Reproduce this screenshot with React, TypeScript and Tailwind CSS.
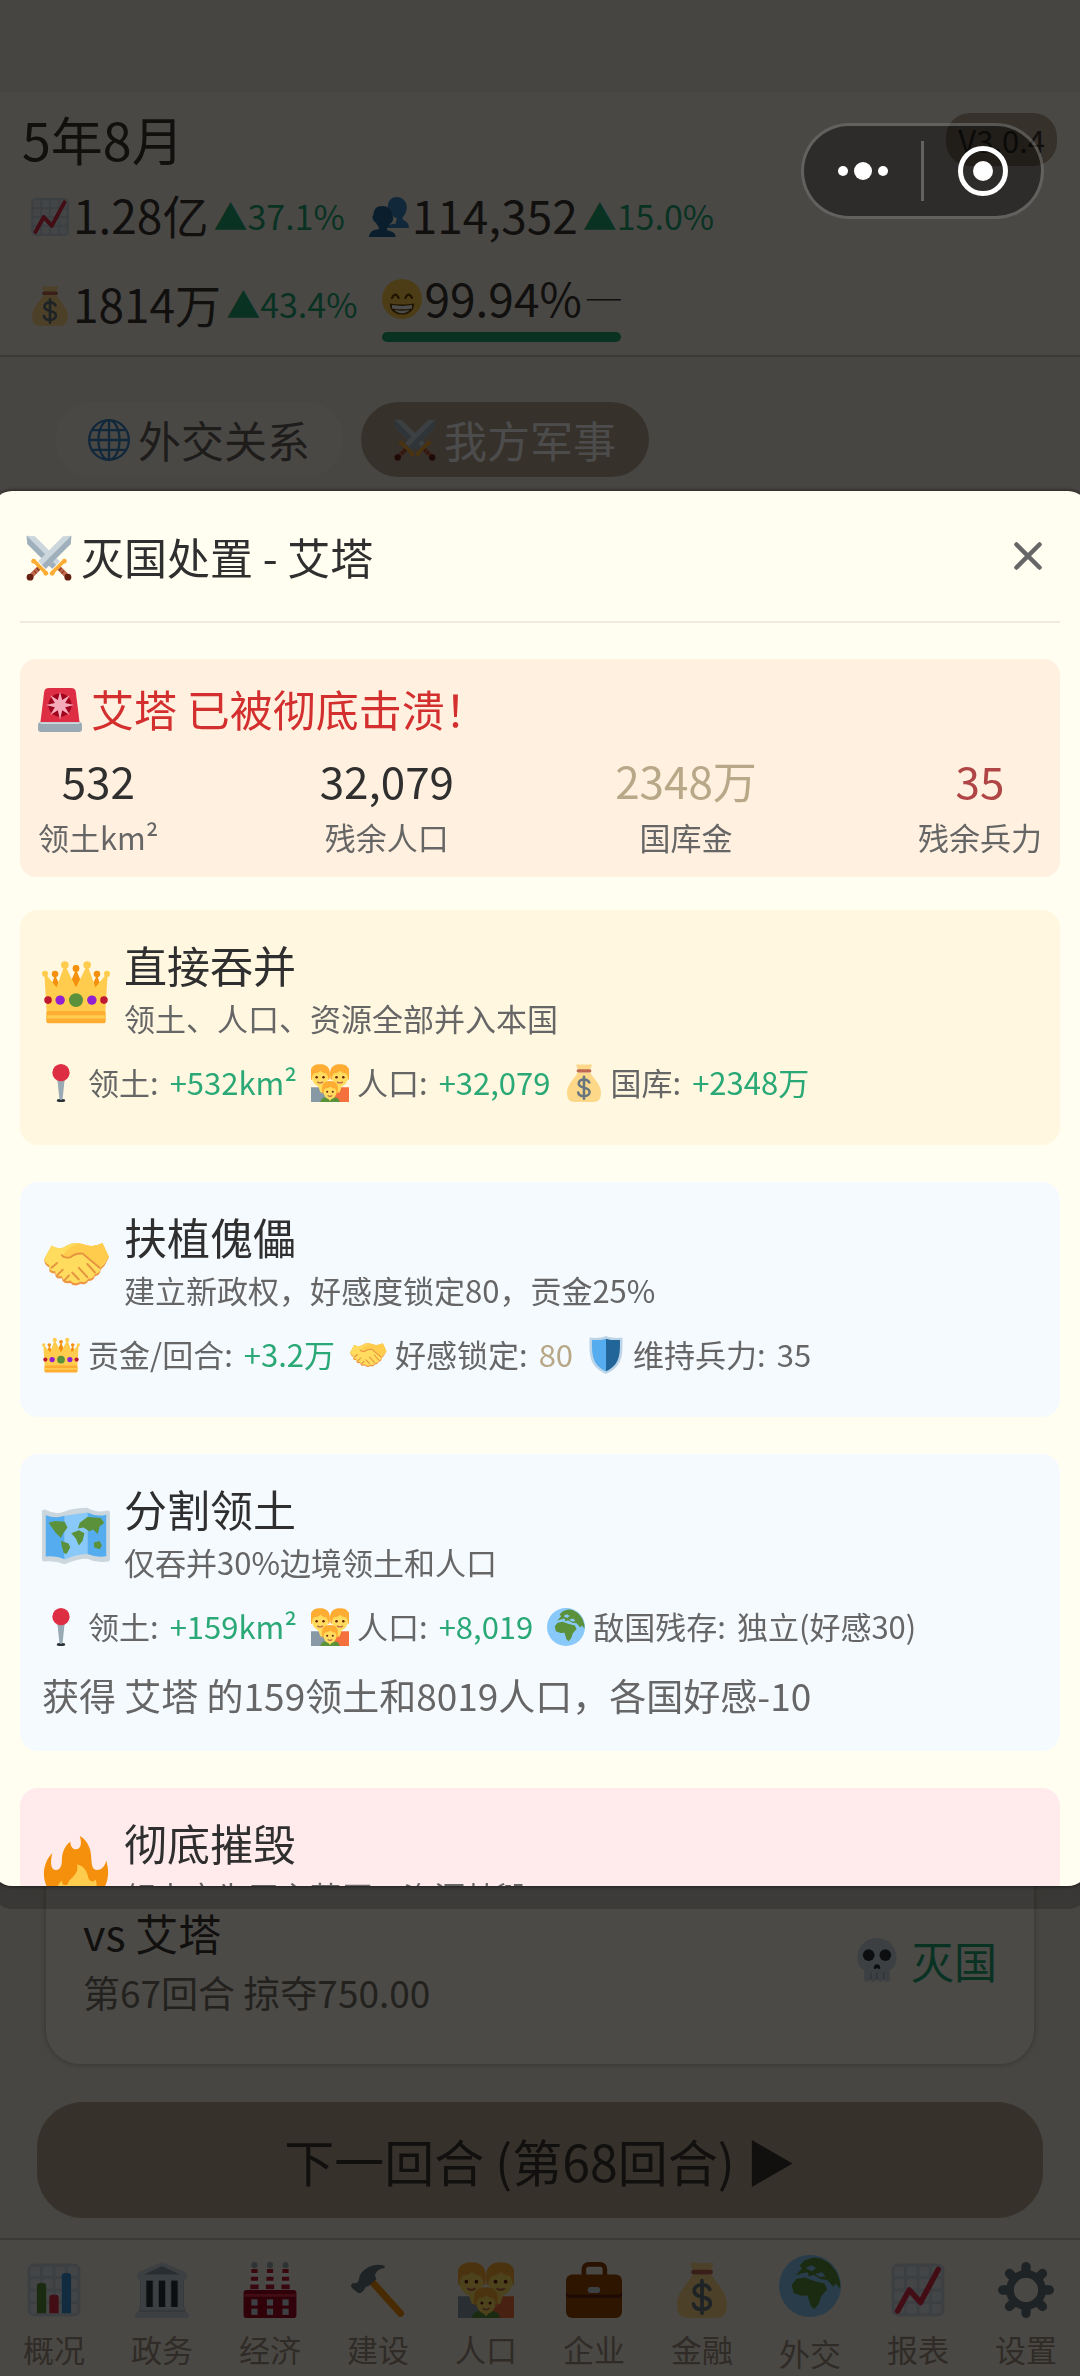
import type { ReactNode } from "react";

const GRID = [4, 12, 20, 28];

function ChartTile() {
  return (
    <>
      <rect x="1" y="1" width="34" height="34" rx="4" fill="#ccd6dd" />
      {GRID.map((x) =>
        GRID.map((y) => (
          <rect key={`${x}-${y}`} x={x - 1} y={y - 1} width="6" height="6" rx="1" fill="#e1e8ed" />
        )),
      )}
    </>
  );
}

function Sword() {
  return (
    <>
      <path d="M35.5.5 29 1 9.500 20.500l6 6L35 7z" fill="#ccd6dd" />
      <path d="M35.500.5 12.500 23.500l3 3L35 7z" fill="#9fb0bc" />
      <path d="m11 25-6.500 6.500" stroke="#c1694f" strokeWidth="3.600" />
      <path d="m8.300 26 2 2M6.300 28l2 2" stroke="#893b22" strokeWidth="1" />
      <circle cx="3.200" cy="33" r="2.700" fill="#662113" />
      <path d="m6.500 20.500 9 9" stroke="#ffac33" strokeWidth="2.800" />
      <circle cx="6" cy="20.500" r="1.900" fill="#ffac33" />
      <circle cx="15.500" cy="30" r="1.900" fill="#ffac33" />
    </>
  );
}

function Face({ x, y, s }: { x: number; y: number; s: number }) {
  return (
    <g transform={`translate(${x} ${y}) scale(${s})`}>
      <ellipse cx="0" cy="1" rx="7.200" ry="8.500" fill="#ffdc5d" />
      <path d="M-8.300 3C-10-7-6-10 0-10S10-7 8.300 3L7 4C7.500 0 6 0 5.500-2 3-2 1-3 .5-4.500-1-2.500-4-2-5.500-2-6 0-7.500 0-7 4z" fill="#ffac33" />
      <circle cx="-3" cy="1.500" r="1.100" fill="#662113" />
      <circle cx="3" cy="1.500" r="1.100" fill="#662113" />
      <path d="M-2.500 5.500q2.500 1.800 5 0" fill="none" stroke="#c1694f" strokeWidth="1.200" />
    </g>
  );
}

const drawings: Record<string, ReactNode> = {
  rising: (
    <>
      <ChartTile />
      <path d="M4.900 31.500 12.400 18l7.200 8L31 4.800" fill="none" stroke="#dd2e44" strokeWidth="3.600" strokeLinecap="round" strokeLinejoin="round" />
    </>
  ),
  bars: (
    <>
      <ChartTile />
      <path d="M7 33V15.500a2 2 0 0 1 2-2h2a2 2 0 0 1 2 2V33z" fill="#5c913b" />
      <path d="M15 33V23a2 2 0 0 1 2-2h2a2 2 0 0 1 2 2v10z" fill="#dd2e44" />
      <path d="M23 33V9a2 2 0 0 1 2-2h2a2 2 0 0 1 2 2v24z" fill="#3b94d9" />
    </>
  ),
  people: (
    <>
      <path d="M24 24c0-2 1-3 1-5-6-2-8-6-8-11 0-5 4-8 8-8s9 3 9 9-3 8-4 10c0 3 6 2 6 9H16c0-2 3-4 8-4z" fill="#3b88c3" />
      <path d="M9 29c0-2-1-3-3-6-2-1-4-5-2-7 0-5 3-8 8-8s9 3 9 9c2 2 0 6-2 7-1 3-3 3-3 5s8 1 8 7H0c0-5 5-7 9-7z" fill="#269" />
    </>
  ),
  money: (
    <>
      <path d="M12.500 6 10.500 1q2-1.500 4 0 2-1.500 3.800 0 2-1.500 3.700 0Q24-.500 25.500 1L23.500 6z" fill="#fdd888" />
      <path d="M12 8C9 14 1 20 2 28c0 6 3 8 7 8h18c4 0 7-2 7-8 1-8-7-14-10-20z" fill="#fdd888" />
      <rect x="11" y="5" width="14" height="3" rx="1.500" fill="#bf6952" />
      <path d="M23 17.500c-1-2-3-2.800-5-2.800-3 0-5 1.500-5 3.800 0 5.500 10.300 2.500 10.300 8 0 2.500-2.300 4-5.300 4s-5-1.200-5.500-3.500M18 12v21" fill="none" stroke="#67757f" strokeWidth="2.400" strokeLinecap="round" />
    </>
  ),
  grin: (
    <>
      <circle cx="18" cy="18" r="18" fill="#ffcc4d" />
      <path d="M9 17q3-6 6 0M21 17q3-6 6 0" fill="none" stroke="#664500" strokeWidth="2" strokeLinecap="round" />
      <path d="M7 22q11 2 22 0c0 6-4 10-11 10S7 28 7 22z" fill="#664500" />
      <path d="M9 23.500q9 1.500 18 0v3q-9 1.500-18 0zM11 28q7 1 14 0-2.500 2.800-7 2.800T11 28z" fill="#fff" />
    </>
  ),
  web: (
    <g fill="none" stroke="#3b88c3" strokeWidth="2">
      <circle cx="18" cy="18" r="17" />
      <ellipse cx="18" cy="18" rx="9" ry="17" />
      <path d="M18 1v34M1 18h34M4 9.500h28M4 26.500h28" />
    </g>
  ),
  swords: (
    <>
      <g transform="matrix(-1 0 0 1 36 0)">
        <Sword />
      </g>
      <Sword />
    </>
  ),
  siren: (
    <>
      <path d="M5 3.500C5.400 1 6.500 0 9 0h18c2.500 0 3.600 1 4 3.500L34 28H2z" fill="#dd2e44" />
      <circle cx="18" cy="14" r="9.500" fill="#a0041e" />
      <path d="m18 3 1.800 6.800L26 6l-3.800 6.200 7.300 1.800-7.300 1.800L26 22l-6.200-3.800L18 26l-1.800-7.800L10 22l3.800-6.200L6.500 14l7.300-1.800L10 6l6.200 3.800z" fill="#f4abba" />
      <path d="M2 28h32q2 0 2 2v4q0 2-2 2H2q-2 0-2-2v-4q0-2 2-2z" fill="#99aab5" />
      <path d="M2 28h32v1.500H2z" fill="#ccd6dd" />
    </>
  ),
  crown: (
    <>
      <g fill="#f4900c">
        <path d="M6.900 9 3 20h9zM29.100 9 24 20h9zM18 6l-5 12h10z" />
        <circle cx="6.900" cy="8.500" r="1.700" />
        <circle cx="18" cy="5.500" r="1.800" />
        <circle cx="29.100" cy="8.500" r="1.700" />
      </g>
      <path d="M1.300 9h1l5.400 6.500L11.500 5h1.200L18 15.500 23.300 5h1.200l3.800 10.500L33.700 9h1L33.500 29h-31z" fill="#ffcc4d" />
      <g fill="#ffcc4d">
        <circle cx="1.600" cy="8.400" r="1.600" />
        <circle cx="12.100" cy="3.700" r="2" />
        <circle cx="23.900" cy="3.700" r="2" />
        <circle cx="34.400" cy="8.400" r="1.600" />
      </g>
      <rect x="2.300" y="28" width="31.400" height="6.500" rx="1" fill="#ffac33" />
      <path d="M2.300 30.300h31.400v1.700H2.300z" fill="#ffcc4d" />
      <circle cx="3.200" cy="22.300" r="2" fill="#be1931" />
      <circle cx="32.800" cy="22.300" r="2" fill="#be1931" />
      <circle cx="9.600" cy="22.300" r="2.500" fill="#9020d0" />
      <circle cx="26.400" cy="22.300" r="2.500" fill="#9020d0" />
      <circle cx="18" cy="22.300" r="3.700" fill="#5c913b" />
    </>
  ),
  pin: (
    <>
      <ellipse cx="18" cy="34.500" rx="4" ry="1.500" fill="#292f33" />
      <path d="M14.500 14h7l-2 19.500q-1.500 1-3 0z" fill="#99aab5" />
      <circle cx="18" cy="8.200" r="8.200" fill="#dd2e44" />
    </>
  ),
  family: (
    <>
      <path d="M0 22h11q3 1 3 4v10H0z" fill="#8899a6" />
      <path d="M36 22H25q-3 1-3 4v10h14z" fill="#f4703c" />
      <path d="M6 19h6l1 8H9zM24 19h6l-3 8h-4z" fill="#ffdc5d" />
      <Face x={8.600} y={11} s={1.080} />
      <Face x={27.400} y={11} s={1.080} />
      <path d="M9 36q0-4 5-4.500h8q5 .5 5 4.500z" fill="#5c913b" />
      <path d="M15 31h6l-3 4z" fill="#ffdc5d" />
      <Face x={18} y={25} s={0.88} />
    </>
  ),
  handshake: (
    <>
      <path d="M1.300 15.500 5 8.500Q10 11 13 8.300q4-2.300 9-.6 5 2 10-.7l3.400 7.600L33 19l-2 2q0 3-3 3.500-.5 2.500-3.500 2.500-1.500 2.500-4 1.500-3.500 2-5.500-.5-4 1-4.500-2.500-3.500 1-3.500-2.500-4 0-3-3-3-1.500-2.700-4.500z" fill="#ef9645" />
      <path d="M1.300 15 5 8.200Q10 11 13 8.200q4-2.300 9-.6 5 2 10-.7l3.400 7.300L33 18l-2 2q0 3-3 3.300-.5 2.500-3.500 2.500-1.500 2.500-4 1.500-3.500 2-5.500-.5-4 1-4.500-2.500-3.500 1-3.500-2.500-4 0-3-3-3-1.500-2.700-3.800z" fill="#ffdc5d" />
      <path d="M14 10q4-3.500 8-2.400 5 2 10-.7l3.400 7.300L30.500 20 21 12.500q-4 0-6.500 2.500-3 0-3.500-1.500z" fill="#ffcc4d" />
      <path d="m30.500 20-9-7.500q-4-.3-6.500 2-3.500.6-4.500-1.200M24 18l4 4.500M19.500 20l4.500 5M16 22.500l3.500 3.700M5 20l3-2.500M8 24l3-3M12 26.500l2.300-2.500" fill="none" stroke="#e59340" strokeWidth="1" strokeLinecap="round" />
    </>
  ),
  shield: (
    <>
      <path d="M18 0c5 2 11 2 15.500 1.500C34 18 34 29 18 36 2 29 2 18 2.500 1.500 7 2 13 2 18 0z" fill="#bdd4e6" />
      <path d="M18 2.500C13 4 8.500 4 4.800 3.700 4.500 18 5 27 18 33.500z" fill="#55acee" />
      <path d="M18 2.500C23 4 27.500 4 31.200 3.700 31.500 18 31 27 18 33.500z" fill="#269" />
    </>
  ),
  map: (
    <>
      <path d="M0 5q0-1 1.500-1Q7 7 12 5t12-2q5 3 10.500 1.500Q36 4.500 36 6v24q0 1.500-1.500 1.500Q29 32.500 24 30q-6 0-12 3-5-2-10.500-1.500Q0 31.500 0 30z" fill="#ccd6dd" />
      <path d="M2 7q5 2 10 .3v23q-4-1.800-10-1.500zM24 5.500Q29 8 34 6.700v22q-5 .8-10-1.200z" fill="#55acee" />
      <path d="M12 7.300 24 5.500v22q-6 .2-12 3z" fill="#88c9f9" />
      <path d="m3.500 11 3.500-1 5 .5 1.500 3-2.500 3.500-1 2-3-3zM10 20.500l4 1.500 1 2-2 3.500-1.500-.5-1-3.500zM20 11l4-3 7 .5 2 2.500-2.500 2-1 4-2.500-2.500-2 1-3-2-3 .5zM15.500 16.500l4-1.500 3 1.500-1 4-2 2.500-1.500-3.500zM27.500 21.500l3-.8 1.200 2.300-1.200 2-3-1z" fill="#5c913b" />
    </>
  ),
  earth: (
    <>
      <circle cx="18" cy="18" r="18" fill="#88c9f9" />
      <path d="M7.400 17.400 10 14l5-1 5 2 6.400 1.500 1.600 3.500-3.500 4-1.500 4.500-2.600 3-2-2-1.800-6-3.700.2-4.500-1.700zM9.800 11.800l3.500-4L12 6l3-3 5-1.500 4.500.5 5 3 4 5 2 6v3.500L33 16.500l-1.500 2-3.500-4-4-.5-4-2.500-2.500 1-1-2.500-3.500.8z" fill="#5c913b" />
      <path d="M15.500 7.500 19 6l2.500 1.500L19 9.500zM21 11l4-1 2 2.500-3.500.3z" fill="#88c9f9" />
    </>
  ),
  fire: (
    <>
      <path d="M35 19c0-2-.5-4-1-6-.5 2.500-2 5-5 5-4 0-2-8-4-12-1-3-3-5-5-6 1 3 1 7-2 7-2 0-3-2-3-4-3 2-4.500 6-4.500 10 0 3-1 5-3 5-2.500 0-3.500-3-2-9-3 3-4.500 7-4.500 11 0 9 7.500 16 17 16s17-7 17-17z" fill="#f4900c" />
      <path d="M28.500 23c-1 1.500-3.500 1.500-4-1-.6-3-2-6-6-7 1 4-1.500 6-3.500 8-1.500 1.500-1 3-2.500 3s-2-1-2-2.500c-2 2-3 4-3 6.500 0 4 4.500 6 10.500 6s11-2.500 11-7c0-2.500 0-4-.5-6z" fill="#ffcc4d" />
    </>
  ),
  skull: (
    <g>
      <path d="M18 0c9.500 0 16 7 16 16 0 5-1.500 8-5.500 10.500V34q0 2-2.500 2t-2.500-2q-1 2-2.500 2t-3-2q-1 2-3 2t-2.500-2q-1 2-3 2T7.500 34v-7.500C3.500 24 2 21 2 16 2 7 8.500 0 18 0z" fill="#ccd6dd" />
      <path d="M13 28v6M18 28v6M23.500 28v6" stroke="#99aab5" strokeWidth="1" />
      <circle cx="11.200" cy="14" r="4.800" fill="#292f33" />
      <circle cx="24.800" cy="14" r="4.800" fill="#292f33" />
      <path d="M15.300 25q0-3.500 2.700-3.500t2.700 3.500q-1 .8-2.700-.5-1.700 1.300-2.700.5z" fill="#292f33" />
    </g>
  ),
  hall: (
    <>
      <rect x="4" y="11" width="28" height="18" fill="#aab8c2" />
      <path d="M4.500 11h3v18h-3zM12.500 11h3v18h-3zM20.500 11h3v18h-3zM28.500 11h3v18h-3z" fill="#ccd6dd" />
      <path d="M8 12h4v17H8zM16 12h4v17h-4zM24 12h4v17h-4z" fill="#292f33" />
      <path d="M18 0 33 6.500q1 .5 1 2-.2 3-2 3H4q-1.800 0-2-3 0-1.500 1-2z" fill="#ccd6dd" />
      <path d="M18 2.500 29.500 8h-23z" fill="#8899a6" />
      <path d="M3 29h30v2.500l2.300 2q.7 2.500-1.300 2.500H2q-2 0-1.300-2.500l2.300-2z" fill="#ccd6dd" />
      <path d="M3 31.500h30" stroke="#aab8c2" strokeWidth="1" />
    </>
  ),
  factory: (
    <>
      {[8, 18, 28].map((x) => (
        <g key={x}>
          <circle cx={x} cy="2" r="2" fill="#99aab5" />
          <path d={`M${x - 2} 4.500h4l1 14h-6z`} fill="#fff" />
          <path d={`M${x - 2} 4.500h4v2.500h-4zM${x - 2.3} 9.500h4.600v2.500h-4.600zM${x - 2.7} 14.500h5.400v3h-5.400z`} fill="#be1931" />
        </g>
      ))}
      <rect x="1" y="18" width="34" height="18" rx="2" fill="#a0041e" />
      <path d="M1.500 20.500h33v1.800h-33z" fill="#dd2e44" />
      {[6, 16, 26].map((x) => (
        <g key={x} fill="#ccd6dd">
          <rect x={x} y="24" width="4" height="4" />
          <rect x={x} y="30" width="4" height="4" />
        </g>
      ))}
    </>
  ),
  hammer: (
    <>
      <path d="m13.500 12 19 21" stroke="#f4900c" strokeWidth="4.500" strokeLinecap="round" />
      <path d="M.7 15q.5-1.500 2-1.500 2 .5 3-2Q6 7 10 4.500 16 .5 22.500 2.500L22 4q-4.500 0-6 4.500l1 2.500-5 4.500-2 .5q-.5 2-2.500 3.500-2 1.500-4-1Q.5 16.500.7 15z" fill="#66757f" />
    </>
  ),
  briefcase: (
    <>
      <rect x="11.500" y="1.500" width="13.500" height="12" rx="3" fill="none" stroke="#8a4200" strokeWidth="3" />
      <rect x="0" y="8" width="36" height="28" rx="4" fill="#9b4800" />
      <path d="M0 21q0 2 3 2h30q3 0 3-2v-2q0 2-3 2H3q-3 0-3-2z" fill="#662113" />
      <rect x="14" y="16" width="8" height="4" rx="2" fill="#ccd6dd" />
    </>
  ),
  gear: (
    <g fill="none" stroke="#66757f">
      <circle cx="18" cy="18" r="10.300" strokeWidth="5" />
      {[0, 45, 90, 135].map((deg) => (
        <path key={deg} d="M18 3v4M18 29v4" strokeWidth="6" strokeLinecap="round" transform={`rotate(${deg} 18 18)`} />
      ))}
    </g>
  ),
};

function Emoji({ name, className }: { name: string; className: string }) {
  return (
    <svg viewBox="0 0 36 36" aria-hidden="true" className={`shrink-0 ${className}`}>
      {drawings[name]}
    </svg>
  );
}

function Metric({ icon, value, trend }: { icon: string; value: string; trend: string }) {
  return (
    <div className="flex items-center gap-[3px]">
      <Emoji name={icon} className="size-[40px]" />
      <span className="pb-[5px]">{value}</span>
      <span className="pb-[4px] pl-[2px] text-[34px] text-[#22a877]">▲{trend}</span>
    </div>
  );
}

type StatItem = { icon: string; label: string; value: string; tone: string };
type OptionItem = {
  icon: string;
  title: string;
  desc: string;
  bg: string;
  stats: StatItem[];
  note?: string;
};

const GREEN = "text-[#2aa876]";
const GOLD = "text-[#b8a888]";
const GRAY = "text-[#666666]";

const options: OptionItem[] = [
  {
    icon: "crown",
    title: "直接吞并",
    desc: "领土、人口、资源全部并入本国",
    bg: "bg-[#fff7e0]",
    stats: [
      { icon: "pin", label: "领土:", value: "+532km²", tone: GREEN },
      { icon: "family", label: "人口:", value: "+32,079", tone: GREEN },
      { icon: "money", label: "国库:", value: "+2348万", tone: GREEN },
    ],
  },
  {
    icon: "handshake",
    title: "扶植傀儡",
    desc: "建立新政权，好感度锁定80，贡金25%",
    bg: "bg-[#f5faff]",
    stats: [
      { icon: "crown", label: "贡金/回合:", value: "+3.2万", tone: GREEN },
      { icon: "handshake", label: "好感锁定:", value: "80", tone: GOLD },
      { icon: "shield", label: "维持兵力:", value: "35", tone: GRAY },
    ],
  },
  {
    icon: "map",
    title: "分割领土",
    desc: "仅吞并30%边境领土和人口",
    bg: "bg-[#f5faff]",
    stats: [
      { icon: "pin", label: "领土:", value: "+159km²", tone: GREEN },
      { icon: "family", label: "人口:", value: "+8,019", tone: GREEN },
      { icon: "earth", label: "敌国残存:", value: "独立(好感30)", tone: GRAY },
    ],
    note: "获得 艾塔 的159领土和8019人口，各国好感-10",
  },
  {
    icon: "fire",
    title: "彻底摧毁",
    desc: "领土变为无主荒原，资源焚毁",
    bg: "bg-[#ffebec]",
    stats: [],
  },
];

const summary = [
  { value: "532", label: "领土km²", tone: "text-[#2f2f2f]" },
  { value: "32,079", label: "残余人口", tone: "text-[#2f2f2f]" },
  { value: "2348万", label: "国库金", tone: GOLD },
  { value: "35", label: "残余兵力", tone: "text-[#b04545]" },
];

const navItems = [
  { icon: "bars", label: "概况" },
  { icon: "hall", label: "政务" },
  { icon: "factory", label: "经济" },
  { icon: "hammer", label: "建设" },
  { icon: "family", label: "人口" },
  { icon: "briefcase", label: "企业" },
  { icon: "money", label: "金融" },
  { icon: "earth", label: "外交", active: true },
  { icon: "rising", label: "报表" },
  { icon: "gear", label: "设置" },
];

function OptionCard({ item }: { item: OptionItem }) {
  return (
    <button type="button" className={`block w-full shrink-0 rounded-[18px] px-[22px] pt-[24px] pb-[28px] text-left ${item.bg}`}>
      <span className="flex items-center gap-[14px]">
        <Emoji name={item.icon} className="mt-[10px] size-[68px]" />
        <span className="flex flex-col gap-[2px]">
          <span className="text-[43px] leading-[60px] text-[#2f2f2f]">{item.title}</span>
          <span className="text-[31px] leading-[44px] text-[#666666]">{item.desc}</span>
        </span>
      </span>
      <span className="mt-[21px] mb-[12px] flex h-[44px] items-center gap-[14px] text-[31px] leading-[44px] text-[#666666]">
        {item.stats.map((s) => (
          <span key={s.label} className="flex items-center gap-[8px] whitespace-nowrap">
            <Emoji name={s.icon} className="size-[38px]" />
            <span className="flex gap-[11px] pb-[2px]">
              <span>{s.label}</span>
              <span className={s.tone}>{s.value}</span>
            </span>
          </span>
        ))}
      </span>
      {item.note && <span className="mt-[18px] block text-[37px] leading-[56px] text-[#666666]">{item.note}</span>}
    </button>
  );
}

export default function App() {
  return (
    <div className="relative flex min-h-screen flex-col overflow-hidden bg-[#efebdf] font-['Noto_Sans_CJK_SC',sans-serif] text-[#3a3733]">
      <div className="h-[92px] bg-[#eae6da]" />
      <header className="relative border-b-2 border-[#c8c2b4] bg-[#f7f2e6] pr-[22px] pb-[13px] pl-[22px]">
        <h1 className="pt-[17px] text-[52px] leading-[60px]">5年8月</h1>
        <span className="absolute top-[21px] right-[23px] rounded-[24px] bg-[#b4a38c] px-[12px] text-[31px] leading-[53px]">
          V3.0.4
        </span>
        <div className="mt-[16px] flex h-[64px] items-center gap-[24px] pl-[8px] text-[46px]">
          <Metric icon="rising" value="1.28亿" trend="37.1%" />
          <Metric icon="people" value="114,352" trend="15.0%" />
        </div>
        <div className="mt-[20px] flex items-center gap-[24px] pl-[8px] text-[46px] leading-[60px]">
          <Metric icon="money" value="1814万" trend="43.4%" />
          <div>
            <div className="flex h-[60px] items-center gap-[3px]">
              <Emoji name="grin" className="size-[40px]" />
              <span className="pb-[5px]">99.94%</span>
              <span className="pl-[2px] text-[34px]">─</span>
            </div>
            <div className="mt-[3px] h-[10px] rounded-full bg-[#22a877]" />
          </div>
        </div>
      </header>

      <main className="flex flex-1 flex-col px-[46px] pt-[45px]">
        <div className="flex gap-[18px] pl-[9px] text-[43px] leading-[75px]">
          <button type="button" className="flex items-center gap-[8px] rounded-full bg-[#f7f2e6] px-[33px] text-[#66625c]">
            <Emoji name="web" className="size-[42px]" />
            外交关系
          </button>
          <button type="button" className="flex items-center gap-[8px] rounded-full bg-[#b4a38c] px-[33px] text-white">
            <Emoji name="swords" className="size-[42px]" />
            我方军事
          </button>
        </div>
        <section className="mt-[36px] flex flex-1 flex-col justify-end rounded-[34px] bg-[#fbf7ec] px-[37px] pb-[46px] shadow-[0_0_6px_rgba(0,0,0,0.3)]">
          <div className="flex items-center justify-between">
            <div>
              <h3 className="text-[43px] leading-[60px]">vs 艾塔</h3>
              <p className="mt-[4px] text-[37px] leading-[52px] text-[#77726a]">第67回合 掠夺750.00</p>
            </div>
            <span className="flex items-center gap-[12px] text-[43px] text-[#22a877]">
              <Emoji name="skull" className="size-[44px]" />
              灭国
            </span>
          </div>
        </section>
      </main>

      <div className="mt-[2px] px-[37px] pt-[36px] pb-[20px]">
        <button type="button" className="w-full rounded-[46px] bg-[#b4a38c] text-center text-[50px] leading-[116px]">
          下一回合 (第68回合) ▶
        </button>
      </div>
      <nav className="flex border-t-2 border-[#c8c2b4] bg-[#f7f2e6] text-[31px] leading-[40px] text-[#a09080]">
        {navItems.map((n) => (
          <button
            key={n.label}
            type="button"
            className={`flex flex-1 flex-col items-center pb-[3px] ${n.active ? "gap-[16px] pt-[15px]" : "gap-[11px] pt-[22px]"}`}
          >
            <Emoji name={n.icon} className={n.active ? "size-[62px]" : "size-[56px]"} />
            {n.label}
          </button>
        ))}
      </nav>

      <div className="fixed inset-0 flex items-center justify-center bg-black/70">
        <div
          role="dialog"
          aria-labelledby="dialog-title"
          className="flex max-h-[1395px] w-[calc(100%+16px)] shrink-0 flex-col overflow-hidden rounded-[20px] bg-[#fffef0] px-[28px] shadow-[0_0_5px_rgba(0,0,0,0.7),0_23px_0_rgba(0,0,0,0.2)]"
        >
          <div className="flex shrink-0 items-center justify-between border-b-2 border-[#f3e9de] pr-[16px] pl-[6px]">
            <h2 id="dialog-title" className="flex items-center gap-[9px] pt-[5px] text-[43px] leading-[120px] text-[#2f2f2f]">
              <Emoji name="swords" className="size-[46px]" />
              <span className="pb-[5px]">灭国处置 - 艾塔</span>
            </h2>
            <button type="button" aria-label="关闭" className="p-[2px]">
              <svg viewBox="0 0 28 28" className="size-[28px]" fill="none" stroke="#666" strokeWidth="4.500" strokeLinecap="round">
                <path d="m2.500 2.500 23 23M25.500 2.500l-23 23" />
              </svg>
            </button>
          </div>

          <section className="mt-[36px] shrink-0 rounded-[16px] bg-[#fff0df] px-[18px] pt-[20px] pb-[18px]">
            <h3 className="flex items-center gap-[9px] text-[43px] leading-[58px] text-[#d32f2f]">
              <Emoji name="siren" className="size-[44px]" />
              <span className="pb-[4px]">艾塔 已被彻底击溃！</span>
            </h3>
            <dl className="mt-[11px] flex justify-between">
              {summary.map((s) => (
                <div key={s.label} className="flex flex-col-reverse items-center gap-[7px]">
                  <dt className="text-[31px] leading-[44px] text-[#666666]">{s.label}</dt>
                  <dd className={`text-[44px] leading-[56px] ${s.tone}`}>{s.value}</dd>
                </div>
              ))}
            </dl>
          </section>

          <div className="mt-[33px] flex flex-col gap-[37px]">
            {options.map((o) => (
              <OptionCard key={o.title} item={o} />
            ))}
          </div>
        </div>
      </div>

      <div className="fixed top-[123px] right-[36px] flex h-[96px] w-[243px] items-center rounded-full border-[3px] border-white/25 bg-black/40">
        <button type="button" aria-label="更多" className="flex flex-1 items-center justify-center gap-[6px]">
          <span className="size-[10px] rounded-full bg-white" />
          <span className="size-[18px] rounded-full bg-white" />
          <span className="size-[10px] rounded-full bg-white" />
        </button>
        <span className="h-[60px] w-[3px] bg-white/25" />
        <button type="button" aria-label="退出" className="flex flex-1 items-center justify-center">
          <span className="flex size-[50px] items-center justify-center rounded-full border-[5px] border-white">
            <span className="size-[20px] rounded-full bg-white" />
          </span>
        </button>
      </div>
    </div>
  );
}
